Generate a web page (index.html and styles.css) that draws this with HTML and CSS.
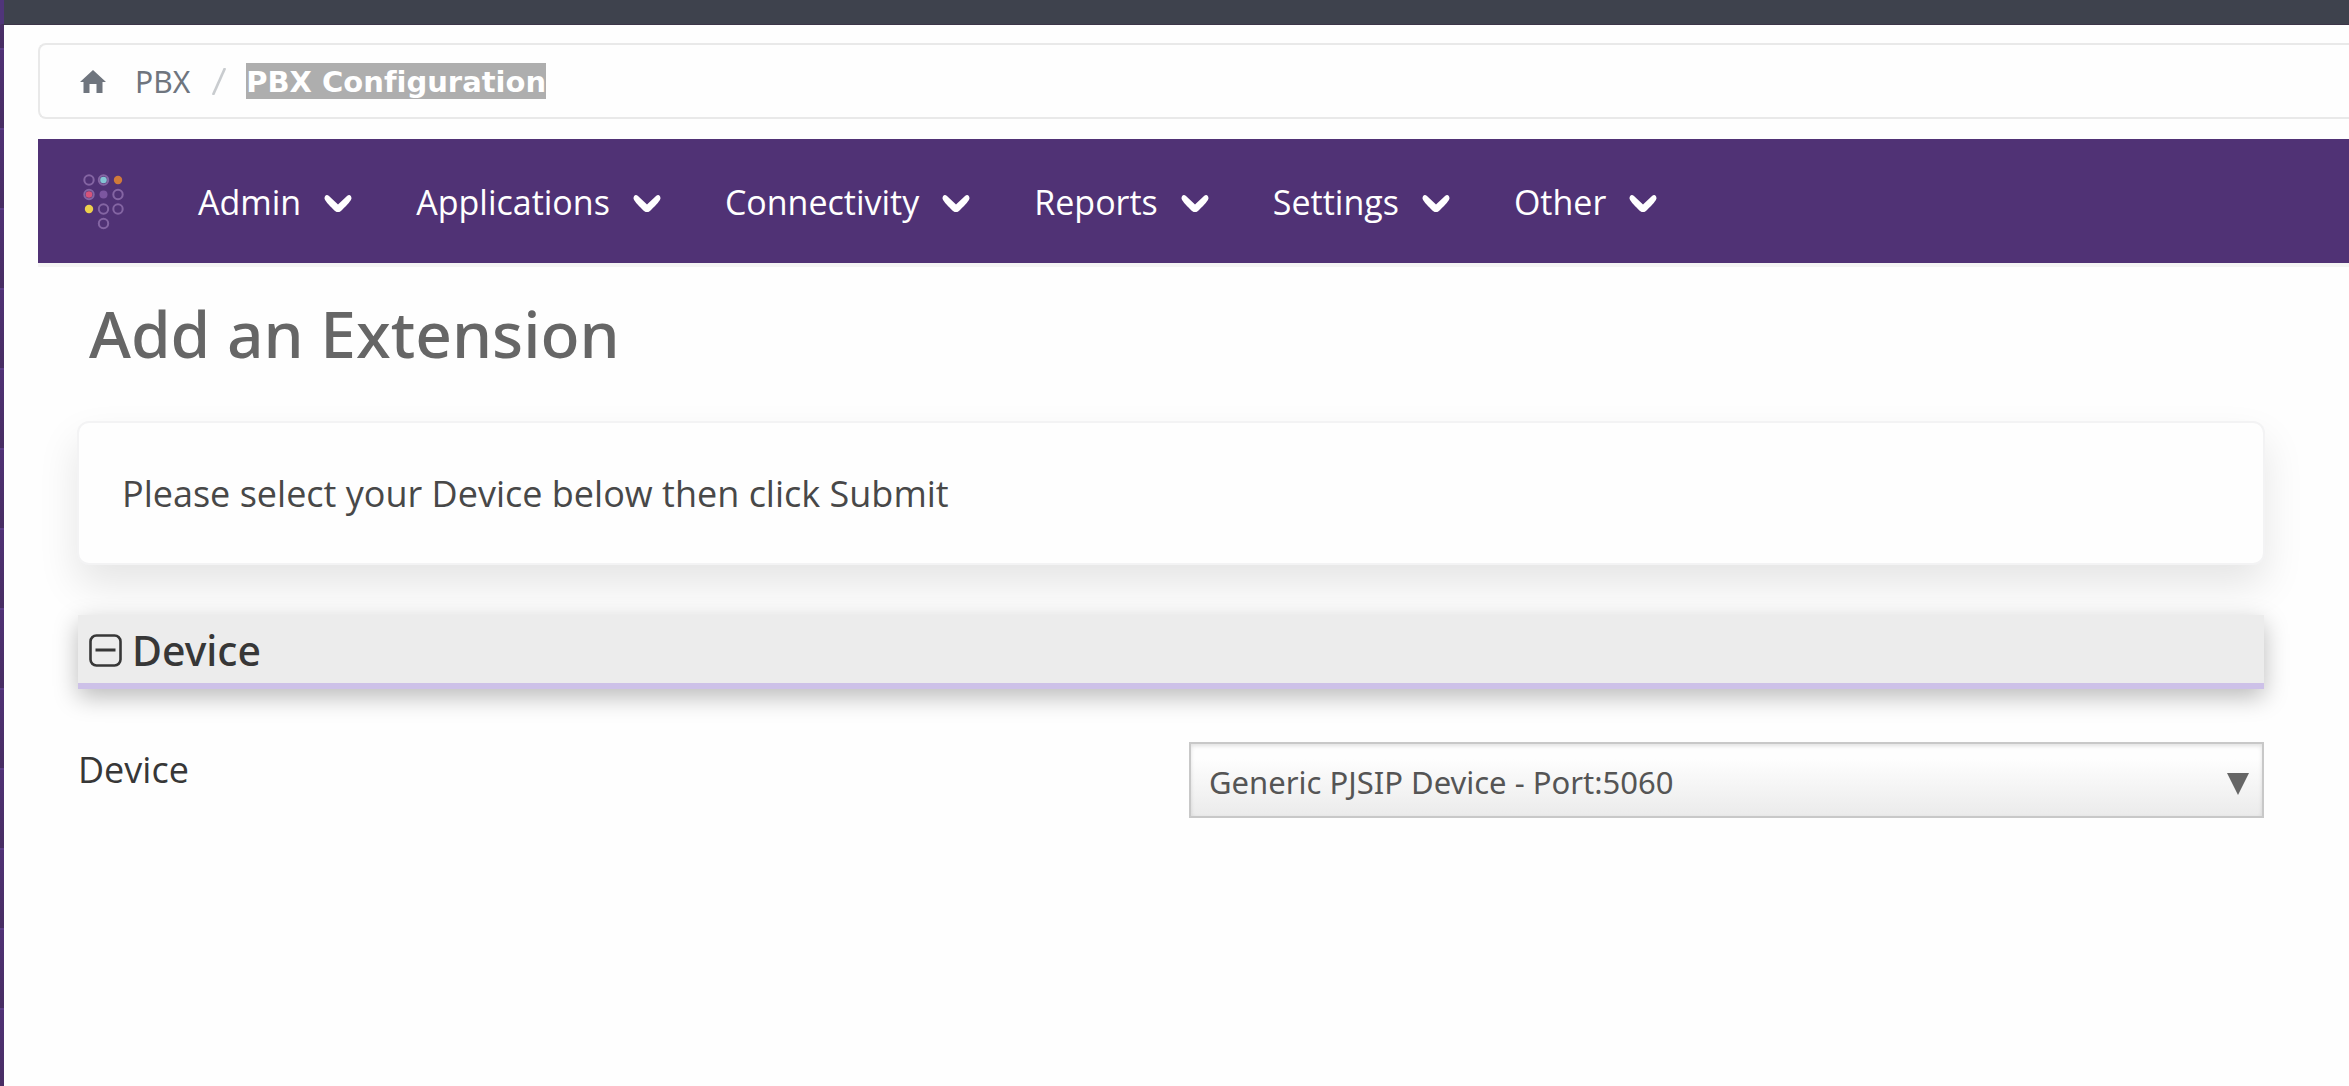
FILE: index.html
```html
<!DOCTYPE html>
<html lang="en">
<head>
<meta charset="utf-8">
<title>PBX Configuration</title>
<link rel="stylesheet" href="styles.css">
</head>
<body>
<svg class="sprite" aria-hidden="true">
  <symbol id="chevron" viewBox="0 0 28 18"><path d="M0.500 4.500C0.500 1 3 0 5 2L14 10.500L23 2C25 0 27.500 1 27.500 4.500C26.500 8 21 13 17 17Q14 19.500 11 17C7 13 1.500 8 0.500 4.500Z" fill="#fff"/></symbol>
</svg>
<div class="topbar"></div>
<div class="shell">
  <aside class="sidebar"></aside>
  <main class="main">
    <nav class="crumbs" aria-label="Breadcrumb">
      <a class="crumb-home" href="#" aria-label="Home"><svg class="home" viewBox="0 0 26 23"><path d="M13 0L26 12H22.500V23H16.500V14H9.500V23H3.500V12H0Z" fill="#6f757e"/></svg></a>
      <a class="crumb" href="#">PBX</a>
      <svg class="slash" viewBox="0 0 14 27" aria-hidden="true"><path d="M13 0L1 27" stroke="#c9cccf" stroke-width="2.600"/></svg>
      <strong class="crumb-current">PBX Configuration</strong>
    </nav>
    <nav class="menu" aria-label="Modules">
      <a class="logo" href="#" aria-label="Dashboard">
        <svg class="logo-mark" viewBox="0 0 42 56">
          <g fill="none" stroke="#8465a3" stroke-width="2">
            <circle cx="6" cy="6" r="4.700"/><circle cx="20.500" cy="6" r="4.700"/>
            <circle cx="6" cy="20.500" r="4.700"/><circle cx="35" cy="20.500" r="4.700"/>
            <circle cx="20.500" cy="35" r="4.700"/><circle cx="35" cy="35" r="4.700"/>
            <circle cx="20.500" cy="49.500" r="4.700"/>
          </g>
          <circle cx="20.500" cy="6" r="3.300" fill="#84c4d4"/><circle cx="35" cy="6" r="4.200" fill="#d07a3a"/>
          <circle cx="6" cy="20.500" r="3.300" fill="#d5547a"/><circle cx="20.500" cy="20.500" r="4" fill="#7c56a0"/>
          <circle cx="6" cy="35" r="4.200" fill="#ecd04c"/>
        </svg>
      </a>
      <button class="menu-item" type="button">Admin<svg class="chevron"><use href="#chevron"/></svg></button>
      <button class="menu-item" type="button">Applications<svg class="chevron"><use href="#chevron"/></svg></button>
      <button class="menu-item" type="button">Connectivity<svg class="chevron"><use href="#chevron"/></svg></button>
      <button class="menu-item" type="button">Reports<svg class="chevron"><use href="#chevron"/></svg></button>
      <button class="menu-item" type="button">Settings<svg class="chevron"><use href="#chevron"/></svg></button>
      <button class="menu-item" type="button">Other<svg class="chevron"><use href="#chevron"/></svg></button>
    </nav>
    <div class="content">
      <h1 class="title">Add an Extension</h1>
      <p class="notice">Please select your Device below then click Submit</p>
      <h2 class="section"><svg class="collapse" viewBox="0 0 33 33" aria-hidden="true"><rect x="1.500" y="1.500" width="30" height="30" rx="6" fill="none" stroke="#373737" stroke-width="2.600"/><path d="M6.500 16H26.500" stroke="#373737" stroke-width="3"/></svg>Device</h2>
      <form class="field">
        <label class="field-label" for="device">Device</label>
        <div class="select-wrap">
          <select class="select" id="device"><option>Generic PJSIP Device - Port:5060</option></select>
          <svg class="arrow" viewBox="0 0 22 22" aria-hidden="true"><path d="M0 0H22L11 22Z" fill="#666"/></svg>
        </div>
      </form>
    </div>
  </main>
</div>
</body>
</html>
```

FILE: styles.css
```css
* { box-sizing: border-box; }
body {
  margin: 0;
  min-height: 100vh;
  display: flex;
  flex-direction: column;
  background: #fefefe;
  color: #373737;
  font-family: "Noto Sans", sans-serif;
  font-size: 36px;
}
.sprite { display: none; }
.topbar {
  height: 25px;
  background: #3e424d;
  border-left: 4px solid #50357a;
  border-bottom: 1px solid #3c3548;
}
.shell { flex: 1; display: flex; }
.sidebar {
  width: 4px;
  background: linear-gradient(#503275, #482d63 78px, #5b3d86 78px) 0 25px / 4px 80px;
}
.main { flex: 1; min-width: 0; padding: 18px 0 0 34px; }

.crumbs {
  display: flex;
  align-items: center;
  height: 76px;
  padding-left: 40px;
  border: 2px solid #e9e9e9;
  border-right: 0;
  border-radius: 8px 0 0 8px;
  font-size: 30px;
}
.crumb-home { display: flex; }
.home { width: 26px; height: 23px; }
.crumb { margin: 0 22px 0 29px; color: #6f757e; text-decoration: none; }
.slash { width: 14px; height: 27px; }
.crumb-current {
  margin-left: 20px;
  padding-top: 2px;
  line-height: 34px;
  background: #aeaeae;
  color: #fff;
  font-family: "DejaVu Sans", sans-serif;
  font-size: 29px;
  font-variant-ligatures: none;
}

.menu {
  display: flex;
  align-items: center;
  height: 128px;
  margin-top: 20px;
  padding: 2px 0 0 45px;
  background: #503275;
  border-bottom: 4px solid #f4f4f4;
}
.logo { display: flex; margin-right: 73px; }
.logo-mark { width: 42px; height: 56px; }
.menu-item {
  display: flex;
  align-items: center;
  gap: 23px;
  margin-right: 64px;
  padding: 0;
  border: 0;
  background: none;
  color: #fff;
  font-family: "Open Sans", sans-serif;
  font-size: 34px;
}
.chevron { width: 28px; height: 18px; margin-top: 2px; }

.content { padding: 22px 85px 0 40px; }
.title {
  margin: 0 0 43px 11px;
  color: #666;
  font-size: 64px;
  font-weight: 500;
  line-height: 89px;
}
.notice {
  margin: 0 -1px 50px;
  padding: 47px 43px 45px;
  background: #fefefe;
  border: 2px solid #f3f3f4;
  border-radius: 12px;
  box-shadow: 0 20px 40px rgba(0, 0, 0, .1);
  color: #484848;
  font-family: "Open Sans", sans-serif;
  line-height: 48px;
}
.section {
  display: flex;
  align-items: center;
  gap: 10px;
  height: 74px;
  margin: 0 0 53px;
  padding: 2px 0 0 11px;
  background: #ececec;
  border-bottom: 6px solid #cdc1e8;
  box-shadow: 0 8px 24px rgba(0, 0, 0, .27);
  font-size: 41px;
  font-weight: 500;
}
.collapse { width: 33px; height: 33px; }
.field { display: grid; grid-template-columns: 1fr 1fr; gap: 36px; }
.field-label { font-family: "Open Sans", sans-serif; line-height: 56px; }
.select-wrap { position: relative; }
.select {
  width: 100%;
  height: 76px;
  padding: 4px 60px 0 18px;
  appearance: none;
  border: 2px solid #c8c8c8;
  border-radius: 0;
  background: linear-gradient(#fefefe 20%, #ebebeb);
  box-shadow: inset 0 2px 4px rgba(0, 0, 0, .12);
  color: #555;
  font: inherit;
  font-size: 31px;
}
.arrow { position: absolute; right: 15px; top: 31px; width: 22px; height: 22px; pointer-events: none; }
```
